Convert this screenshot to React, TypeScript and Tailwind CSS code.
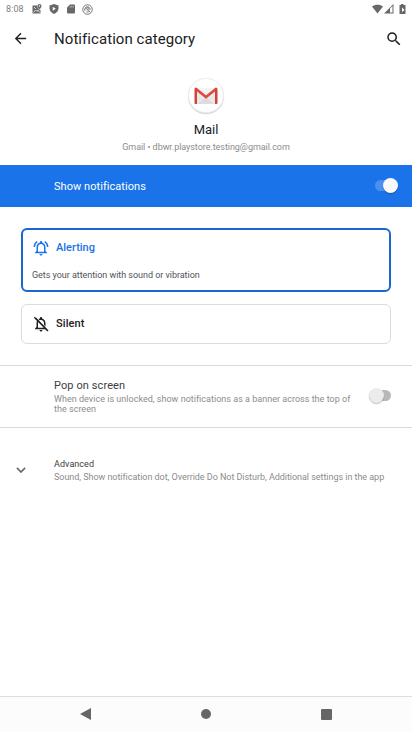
import React from "react";

function StatusBar() {
  return (
    <div className="flex h-[18px] shrink-0 items-center pl-[6px] pr-[5px] text-[#686868]">
      <span className="w-[26px] text-[9px] leading-[18px] tracking-[0.1px] text-[#808080]">8:08</span>
      <svg className="h-[10px] w-[10px]" viewBox="0 0 20 20" fill="currentColor">
        <path d="M1 3h10v4l4 5h2v7H1z" />
        <path d="M15 0a4 4 0 0 1 4 4c0 3-4 7-4 7s-4-4-4-7a4 4 0 0 1 4-4z" />
        <circle cx="15" cy="4" r="1.4" fill="#fff" />
        <path d="M3 17l4-5 3 3 2-3 3 5M4 6l4 4" fill="none" stroke="#fff" strokeWidth="1.4" />
      </svg>
      <svg className="ml-[7px] h-[10px] w-[10px]" viewBox="0 0 20 20" fill="currentColor">
        <path d="M10 0l9 3v6c0 5-4 9-9 11C5 18 1 14 1 9V3z" />
        <path d="M7.500 5.500l6 4-6 4z" fill="#fff" />
      </svg>
      <svg className="ml-[7px] h-[10px] w-[10px]" viewBox="0 0 20 20" fill="currentColor">
        <path d="M8 1h8a2 2 0 0 1 2 2v14a2 2 0 0 1-2 2H4a2 2 0 0 1-2-2V7z" />
        <path d="M8.500 4v3M11.500 4v3M14.500 4v3" stroke="#fff" strokeWidth="1" />
      </svg>
      <svg className="ml-[6px] h-[11px] w-[11px]" viewBox="0 0 22 22" fill="none" stroke="currentColor" strokeWidth="1.800">
        <circle cx="11" cy="11" r="9.500" />
        <path d="M6 13.500a5.500 5.500 0 1 1 10.500-2.500M6 7l10 9M9 15.500a5 5 0 0 0 4 0" strokeWidth="2" />
        <path d="M10 8a3 3 0 0 1 4 4" />
      </svg>
      <svg className="ml-auto h-[10px] w-[11px]" viewBox="0 0 22 20" fill="currentColor">
        <path d="M11 19L0 5C6 0 16 0 22 5z" />
      </svg>
      <svg className="ml-[1px] h-[10px] w-[10px]" viewBox="0 0 20 20" fill="currentColor">
        <path d="M0 19L19 0v19zM12 9v8h5V4z" fillRule="evenodd" />
      </svg>
      <svg className="ml-[5px] mr-[1px] h-[10px] w-[7px]" viewBox="0 0 14 20" fill="currentColor">
        <path d="M4 0h5v2h4v18H1V2h3z" />
        <path d="M6 7v9l5-4z" fill="#fff" />
      </svg>
    </div>
  );
}

function AppBar() {
  return (
    <header className="flex h-[42px] shrink-0 items-center pl-[12px] pr-[9.500px] text-[#202124]">
      <svg className="mb-px h-[17px] w-[17px]" viewBox="0 0 24 24" fill="currentColor">
        <path d="M20 11H7.830l5.590-5.590L12 4l-8 8 8 8 1.410-1.410L7.830 13H20v-2z" />
      </svg>
      <h1 className="ml-[25px] text-[15px] leading-[20px] tracking-[0.060px]">Notification category</h1>
      <svg className="ml-auto h-[18px] w-[18px]" viewBox="0 0 24 24" fill="currentColor">
        <path d="M15.500 14h-.79l-.28-.27A6.470 6.470 0 0 0 16 9.500 6.500 6.500 0 1 0 9.500 16c1.610 0 3.090-.59 4.230-1.570l.27.28v.79l5 4.990L20.490 19l-4.990-5zm-6 0C7.010 14 5 11.990 5 9.500S7.010 5 9.500 5 14 7.010 14 9.500 11.990 14 9.500 14z" />
      </svg>
    </header>
  );
}

function GmailLogo() {
  return (
    <div className="flex h-[35px] w-[36px] items-center justify-center rounded-full border border-[#ececec] bg-white shadow-[0_1px_1px_rgba(0,0,0,0.18)]">
      <svg className="h-[18px] w-[24px] shrink-0" viewBox="0 0 24 18">
        <rect x="1" y="1" width="22" height="16" rx="1" fill="#e9e9e9" />
        <path d="M4 17l8-7 8 7z" fill="#dcdcdc" />
        <path d="M4 1h16l-8 7z" fill="#f3f3f3" />
        <path d="M2 2l10 8L22 2" fill="none" stroke="#dd4b3e" strokeWidth="2.600" />
        <path d="M.500 2A1.500 1.500 0 0 1 3 1v16H1.500a1 1 0 0 1-1-1zM23.500 2A1.500 1.500 0 0 0 21 1v16h1.500a1 1 0 0 0 1-1z" fill="#d54236" />
      </svg>
    </div>
  );
}

export default function App() {
  return (
    <div className="flex h-[732px] w-[412px] flex-col overflow-hidden bg-white font-['Roboto',sans-serif] text-[#202124]">
      <StatusBar />
      <AppBar />

      <section className="flex h-[105px] shrink-0 flex-col items-center pt-[18px]">
        <GmailLogo />
        <div className="mt-[8px] text-[13px] leading-[17px]">Mail</div>
        <div className="mt-[3px] whitespace-nowrap text-[9px] leading-[12px] tracking-[-0.050px] text-[#8c8c8c]">
          Gmail • dbwr.playstore.testing@gmail.com
        </div>
      </section>

      <div className="flex h-[42px] shrink-0 items-center justify-between bg-[#1a73e8] pl-[54px] pr-[14.500px]">
        <span className="pt-[2px] text-[11px] leading-[14px] tracking-[0.050px] text-white">Show notifications</span>
        <div className="mb-px flex h-[11px] w-[22.500px] items-center justify-end rounded-full bg-[#4a90ee]">
          <div className="h-[15px] w-[15px] shrink-0 rounded-full bg-[#fafafa] shadow-[0_1px_1px_rgba(0,0,0,0.25)]" />
        </div>
      </div>

      <section className="flex h-[158px] shrink-0 flex-col gap-[12px] px-[21px] pt-[21px]">
        <div className="h-[64px] rounded-[6px] border-2 border-[#1967d2] px-[9px] pt-[9px]">
          <div className="flex items-center text-[#1a73e8]">
            <svg className="h-[18px] w-[18px]" viewBox="0 0 24 24" fill="currentColor">
              <path d="M18 16v-5c0-3.070-1.640-5.640-4.500-6.320V4a1.500 1.500 0 0 0-3 0v.68C7.630 5.360 6 7.920 6 11v5l-2 2v1h16v-1l-2-2zm-2 1H8v-6c0-2.480 1.510-4.500 4-4.500s4 2.020 4 4.500v6zm-4 5c1.100 0 2-.9 2-2h-4a2 2 0 0 0 2 2zM7.580 4.080L6.150 2.650C3.750 4.480 2.170 7.300 2.030 10.500h2a8.440 8.440 0 0 1 3.550-6.420zM19.970 10.500h2c-.15-3.200-1.730-6.020-4.120-7.850l-1.420 1.430a8.500 8.500 0 0 1 3.540 6.420z" />
            </svg>
            <span className="ml-[6px] text-[11px] font-medium leading-[14px]">Alerting</span>
          </div>
          <p className="mt-[12px] text-[9px] leading-[12px] tracking-[-0.040px] text-[#505357]">
            Gets your attention with sound or vibration
          </p>
        </div>
        <div className="flex h-[40px] items-center rounded-[6px] border border-[#dadce0] px-[10px]">
          <svg className="h-[18px] w-[18px]" viewBox="0 0 24 24" fill="currentColor">
            <path d="M21 19.720L5.270 3.490 4 4.760l2.800 2.800v.01c-.52.99-.8 2.160-.8 3.420v5l-2 2v1h13.730l2 2L21 19.720zM8 17v-6c0-.68.110-1.320.340-1.900L16 17H8zm4 5c1.110 0 2-.89 2-2h-4c0 1.110.89 2 2 2zM12 6.500c2.490 0 4 2.020 4 4.500v2.300l2 2.050V11c0-3.070-1.630-5.640-4.500-6.320V4a1.500 1.500 0 0 0-3 0v.68c-.7.160-1.350.45-1.900.80l1.470 1.470c.56-.28 1.210-.45 1.930-.45z" />
            <path d="M3 3l18.500 18.500" fill="none" stroke="currentColor" strokeWidth="1.700" />
          </svg>
          <span className="ml-[6px] text-[11px] font-medium leading-[14px] tracking-[0.1px]">Silent</span>
        </div>
      </section>

      <section className="flex h-[63px] shrink-0 items-start justify-between border-y border-[#dadada] pl-[54px] pr-[21px]">
        <div className="pt-[13px]">
          <div className="text-[11px] leading-[14px] tracking-[0.1px] text-[#3c4043]">Pop on screen</div>
          <p className="mt-px whitespace-nowrap text-[9px] leading-[10px] tracking-[0.020px] text-[#8c8c8c]">
            When device is unlocked, show notifications as a banner across the top of
            <br />
            the screen
          </p>
        </div>
        <div className="mt-[24px] flex h-[11px] w-[22.500px] items-center rounded-full bg-[#b9b9b9]">
          <div className="h-[15px] w-[15px] shrink-0 rounded-full bg-[#ececec] shadow-[0_1px_1px_rgba(0,0,0,0.25)]" />
        </div>
      </section>

      <section className="flex grow items-start pl-[12px] pt-[30px]">
        <svg className="mt-[3px] h-[18px] w-[18px] text-[#686868]" viewBox="0 0 24 24" fill="currentColor">
          <path d="M7.410 8.590L12 13.170l4.590-4.580L18 10l-6 6-6-6z" stroke="currentColor" strokeWidth="0.400" />
        </svg>
        <div className="ml-[24px] whitespace-nowrap">
          <div className="text-[9px] leading-[12px] tracking-[0.050px] text-[#3c4043]">Advanced</div>
          <div className="mt-px text-[9px] leading-[12px] tracking-[-0.040px] text-[#8c8c8c]">
            Sound, Show notification dot, Override Do Not Disturb, Additional settings in the app
          </div>
        </div>
      </section>

      <nav className="flex h-[36px] shrink-0 items-center border-t border-[#dedede] bg-[#fcfcfc] pl-[80px] text-[#666]">
        <svg className="mb-px h-[12px] w-[11px]" viewBox="0 0 11 12" fill="currentColor">
          <path d="M0 6L11 0v12z" />
        </svg>
        <div className="mb-[2px] ml-[110px] h-[10px] w-[10px] rounded-full bg-[#666]" />
        <div className="ml-[110px] h-[11px] w-[11px] rounded-[1px] bg-[#666]" />
      </nav>
    </div>
  );
}
